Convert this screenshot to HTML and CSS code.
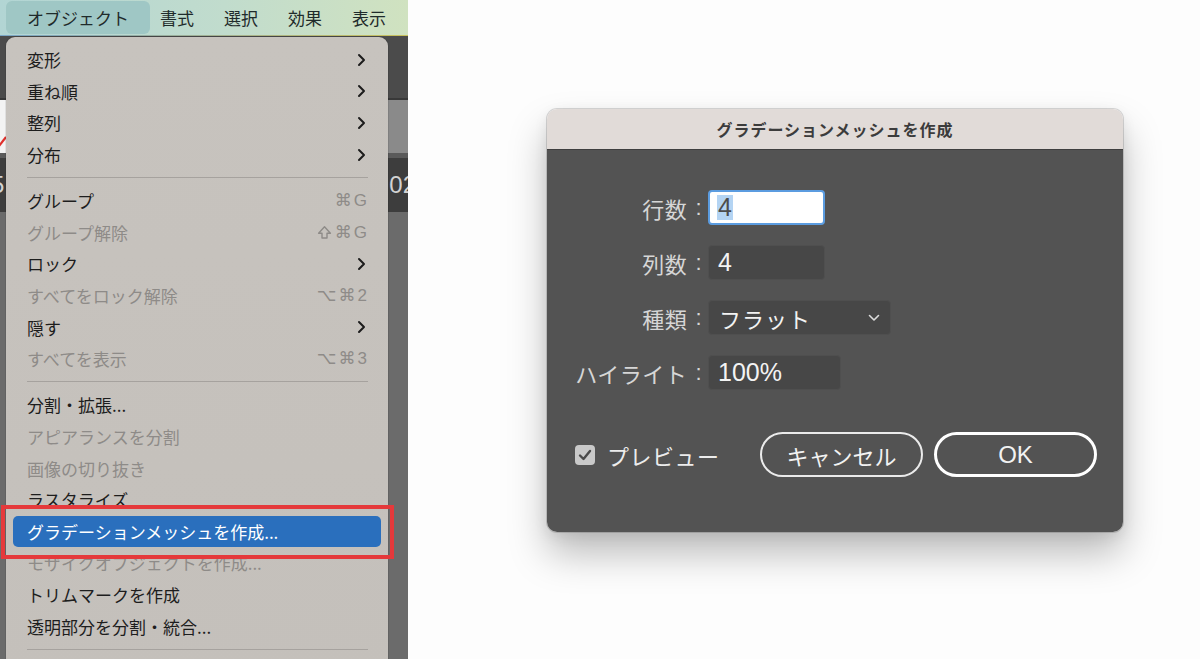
FILE: index.html
```html
<!DOCTYPE html>
<html lang="ja">
<head>
<meta charset="utf-8">
<title>グラデーションメッシュを作成</title>
<link rel="stylesheet" href="styles.css">
</head>
<body>
<div class="screen">
  <div class="left">
    <div class="menubar">
      <span class="mb-item active">オブジェクト</span>
      <span class="mb-item">書式</span>
      <span class="mb-item">選択</span>
      <span class="mb-item">効果</span>
      <span class="mb-item">表示</span>
    </div>
    <div class="band dark1"></div>
    <div class="band mid">
      <span class="white-seg">
        <svg width="8" height="56" viewBox="0 0 8 56"><path d="M-1 46 L6 37" stroke="#e0302c" stroke-width="2.2" fill="none"/></svg>
      </span>
    </div>
    <div class="band dark2"><span class="num-l">5</span><span class="num-r">02</span></div>
    <div class="band rest"></div>

    <div class="menu">
      <div class="mi"><span>変形</span><svg class="chev" width="9" height="14" viewBox="0 0 9 14"><path d="M2 2 L7 7 L2 12" stroke="#1c1c1c" stroke-width="2" fill="none" stroke-linecap="round" stroke-linejoin="round"/></svg></div>
      <div class="mi"><span>重ね順</span><svg class="chev" width="9" height="14" viewBox="0 0 9 14"><path d="M2 2 L7 7 L2 12" stroke="#1c1c1c" stroke-width="2" fill="none" stroke-linecap="round" stroke-linejoin="round"/></svg></div>
      <div class="mi"><span>整列</span><svg class="chev" width="9" height="14" viewBox="0 0 9 14"><path d="M2 2 L7 7 L2 12" stroke="#1c1c1c" stroke-width="2" fill="none" stroke-linecap="round" stroke-linejoin="round"/></svg></div>
      <div class="mi"><span>分布</span><svg class="chev" width="9" height="14" viewBox="0 0 9 14"><path d="M2 2 L7 7 L2 12" stroke="#1c1c1c" stroke-width="2" fill="none" stroke-linecap="round" stroke-linejoin="round"/></svg></div>
      <div class="sep"></div>
      <div class="mi"><span>グループ</span><span class="sc">⌘G</span></div>
      <div class="mi dis"><span>グループ解除</span><span class="sc"><svg class="shift" width="15" height="15" viewBox="0 0 15 15"><path d="M7.5 1.8 L13.4 8.2 H10 V13 H5 V8.2 H1.6 Z" stroke="#8e8b88" stroke-width="1.4" fill="none" stroke-linejoin="round"/></svg>⌘G</span></div>
      <div class="mi"><span>ロック</span><svg class="chev" width="9" height="14" viewBox="0 0 9 14"><path d="M2 2 L7 7 L2 12" stroke="#1c1c1c" stroke-width="2" fill="none" stroke-linecap="round" stroke-linejoin="round"/></svg></div>
      <div class="mi dis"><span>すべてをロック解除</span><span class="sc">⌥⌘2</span></div>
      <div class="mi"><span>隠す</span><svg class="chev" width="9" height="14" viewBox="0 0 9 14"><path d="M2 2 L7 7 L2 12" stroke="#1c1c1c" stroke-width="2" fill="none" stroke-linecap="round" stroke-linejoin="round"/></svg></div>
      <div class="mi dis"><span>すべてを表示</span><span class="sc">⌥⌘3</span></div>
      <div class="sep"></div>
      <div class="mi"><span>分割・拡張...</span></div>
      <div class="mi dis"><span>アピアランスを分割</span></div>
      <div class="mi dis"><span>画像の切り抜き</span></div>
      <div class="mi"><span>ラスタライズ</span></div>
      <div class="mi sel"><span>グラデーションメッシュを作成...</span></div>
      <div class="mi dis"><span>モザイクオブジェクトを作成...</span></div>
      <div class="mi"><span>トリムマークを作成</span></div>
      <div class="mi"><span>透明部分を分割・統合...</span></div>
      <div class="sep"></div>
    </div>
    <div class="redbox"></div>
  </div>

  <div class="right">
    <div class="dialog">
      <div class="dlg-title">グラデーションメッシュを作成</div>
      <div class="dlg-body">
        <div class="form">
          <div class="lbl">行数<span class="colon">:</span></div>
          <div class="fld focus w117"><span class="selected">4</span></div>
          <div class="lbl">列数<span class="colon">:</span></div>
          <div class="fld dark w117">4</div>
          <div class="lbl">種類<span class="colon">:</span></div>
          <div class="fld dark select w183"><span class="sel-text">フラット</span>
            <svg class="sel-chev" width="12" height="8" viewBox="0 0 12 8"><path d="M1.5 1.5 L6 6 L10.5 1.5" stroke="#dcdcdc" stroke-width="1.6" fill="none" stroke-linecap="round" stroke-linejoin="round"/></svg>
          </div>
          <div class="lbl">ハイライト<span class="colon">:</span></div>
          <div class="fld dark w133">100%</div>
        </div>
        <div class="footer">
          <div class="chk">
            <svg width="20" height="20" viewBox="0 0 20 20"><path d="M5 10.5 L8.5 14 L15 6" stroke="#4a4a4a" stroke-width="2.4" fill="none" stroke-linecap="round" stroke-linejoin="round"/></svg>
          </div>
          <span class="chk-label">プレビュー</span>
          <div class="btns">
            <div class="btn">キャンセル</div>
            <div class="btn ok">OK</div>
          </div>
        </div>
      </div>
    </div>
  </div>
</div>
</body>
</html>
```

FILE: styles.css
```css
html, body {
  margin: 0;
  padding: 0;
}
body {
  width: 1200px;
  height: 659px;
  overflow: hidden;
  font-family: "Noto Sans CJK JP", sans-serif;
  background: #fdfdfd;
}
.screen {
  display: flex;
  width: 1200px;
  height: 659px;
}

/* ---------- left: app + menu ---------- */
.left {
  position: relative;
  width: 408px;
  height: 659px;
  overflow: hidden;
  display: flex;
  flex-direction: column;
  background: #6b6b6b;
}
.menubar {
  height: 35px;
  flex: none;
  display: flex;
  align-items: flex-start;
  gap: 30px;
  background: linear-gradient(90deg, #b2d5d4 0%, #c1dccd 55%, #d0e2c0 100%);
  border-bottom: 1px solid;
  border-image: linear-gradient(90deg, #7aa6c6, #a9b48c 60%, #c9c05a) 1;
}
.mb-item {
  font-size: 17px;
  line-height: 33px;
  color: #1f2b2b;
  margin-top: 1px;
}
.mb-item.active {
  margin-left: 6px;
  margin-right: -20px;
  padding: 0 21px;
  border-radius: 6px;
  background: #9fc7c5;
}
.band { flex: none; }
.dark1 {
  height: 62px;
  background: #4b4b4b;
  border-bottom: 2px solid #383838;
}
.mid {
  height: 53px;
  background: #8a8a8a;
  border-bottom: 5px solid #5a5a5a;
  display: flex;
}
.white-seg {
  width: 100px;
  background: #f3f3f3;
  display: block;
}
.white-seg svg { display: block; }
.dark2 {
  height: 54px;
  background: #3d3d3d;
  display: flex;
  justify-content: space-between;
  align-items: center;
  font-family: "Liberation Sans", sans-serif;
  font-size: 24px;
  color: #d2d2d2;
}
.num-l { margin-left: -9px; }
.num-r { margin-right: -8px; }
.rest { flex: 1; background: #6b6b6b; }

.menu {
  position: absolute;
  left: 6px;
  top: 37px;
  width: 382px;
  bottom: -20px;
  box-sizing: border-box;
  padding-top: 7px;
  background: linear-gradient(180deg, #c7c3be, #c4c0bb);
  border-radius: 9px 9px 0 0;
  box-shadow: 0 0 0 1px rgba(0,0,0,0.08);
}
.mi {
  height: 31.6px;
  display: flex;
  align-items: center;
  justify-content: space-between;
  padding: 0 21px 0 21px;
  font-size: 17px;
  color: #1d1d1d;
  white-space: nowrap;
}
.mi.dis { color: #8e8b88; }
.mi.sel {
  margin: 0 7px;
  padding: 0 14px;
  background: #2a6fbd;
  color: #ffffff;
  border-radius: 5px;
}
.chev { margin-right: 1px; }
.sc {
  display: flex;
  align-items: center;
  font-family: "Liberation Sans", "DejaVu Sans", sans-serif;
  font-size: 17px;
  color: #8e8b88;
  letter-spacing: 2px;
  margin-right: -2px;
}
.shift {
  margin-right: 3px;
}
.sep {
  height: 14.6px;
  display: flex;
  align-items: center;
  padding: 0 20px 0 21px;
}
.sep::before {
  content: "";
  flex: 1;
  height: 1px;
  background: #a6a29e;
}
.redbox {
  position: absolute;
  left: 1px;
  top: 505px;
  width: 393px;
  height: 54px;
  box-sizing: border-box;
  border: 4px solid #e5393b;
}

/* ---------- right: dialog ---------- */
.right {
  flex: 1;
  background: #fdfdfd;
  padding: 109px 0 0 139px;
}
.dialog {
  width: 576px;
  border-radius: 10px;
  overflow: hidden;
  box-shadow: 0 0 0 1px rgba(0,0,0,0.14), 0 22px 38px rgba(0,0,0,0.26), 0 4px 14px rgba(0,0,0,0.08);
}
.dlg-title {
  height: 40px;
  line-height: 40px;
  background: #e1dbd8;
  text-align: center;
  font-size: 16px;
  font-weight: 700;
  letter-spacing: 1px;
  color: #3c3c3c;
  border-bottom: 1px solid #3f3f3f;
}
.dlg-body {
  height: 382px;
  box-sizing: border-box;
  background: #535353;
  padding: 40px 26px 0 28px;
}
.form {
  display: grid;
  grid-template-columns: 128px auto;
  grid-auto-rows: 35px;
  justify-content: start;
  justify-items: start;
  column-gap: 5px;
  row-gap: 20px;
}
.lbl {
  justify-self: end;
  height: 35px;
  display: flex;
  align-items: center;
  font-size: 22px;
  color: #d6d6d6;
  white-space: nowrap;
  letter-spacing: 0.5px;
}
.colon {
  margin-left: 8px;
  margin-right: 1px;
  font-family: "Liberation Sans", sans-serif;
}
.fld {
  height: 35px;
  box-sizing: border-box;
  border-radius: 4px;
  display: flex;
  align-items: center;
  padding-left: 9px;
  font-family: "Liberation Sans", "Noto Sans CJK JP", sans-serif;
  font-size: 25px;
}
.w117 { width: 117px; }
.w133 { width: 133px; }
.w183 { width: 183px; }
.fld.focus {
  background: #ffffff;
  border: 2px solid #5b9ce0;
  color: #4c4c4c;
  padding-left: 7px;
}
.selected {
  background: #b4d4f3;
  line-height: 25px;
  padding: 0 1px;
}
.fld.dark {
  background: #474747;
  border: 1px solid #4f4f4f;
  color: #f3f3f3;
}
.fld.select {
  justify-content: space-between;
  padding: 0 10px 0 10px;
}
.sel-text {
  font-family: "Noto Sans CJK JP", sans-serif;
  font-size: 22px;
  letter-spacing: 1px;
}
.footer {
  margin-top: 42px;
  height: 45px;
  display: flex;
  align-items: center;
}
.chk {
  width: 20px;
  height: 20px;
  border-radius: 4px;
  background: #c9c9c9;
}
.chk svg { display: block; }
.chk-label {
  margin-left: 12px;
  font-size: 22px;
  color: #ececec;
  letter-spacing: 0.5px;
}
.btns {
  margin-left: auto;
  display: flex;
  gap: 11px;
}
.btn {
  width: 163px;
  height: 45px;
  box-sizing: border-box;
  border-radius: 23px;
  border: 2px solid #ebebeb;
  color: #f2f2f2;
  font-size: 22px;
  display: flex;
  align-items: center;
  justify-content: center;
}
.btn.ok {
  border: 3px solid #ffffff;
  font-family: "Liberation Sans", sans-serif;
  font-size: 24px;
}
```
